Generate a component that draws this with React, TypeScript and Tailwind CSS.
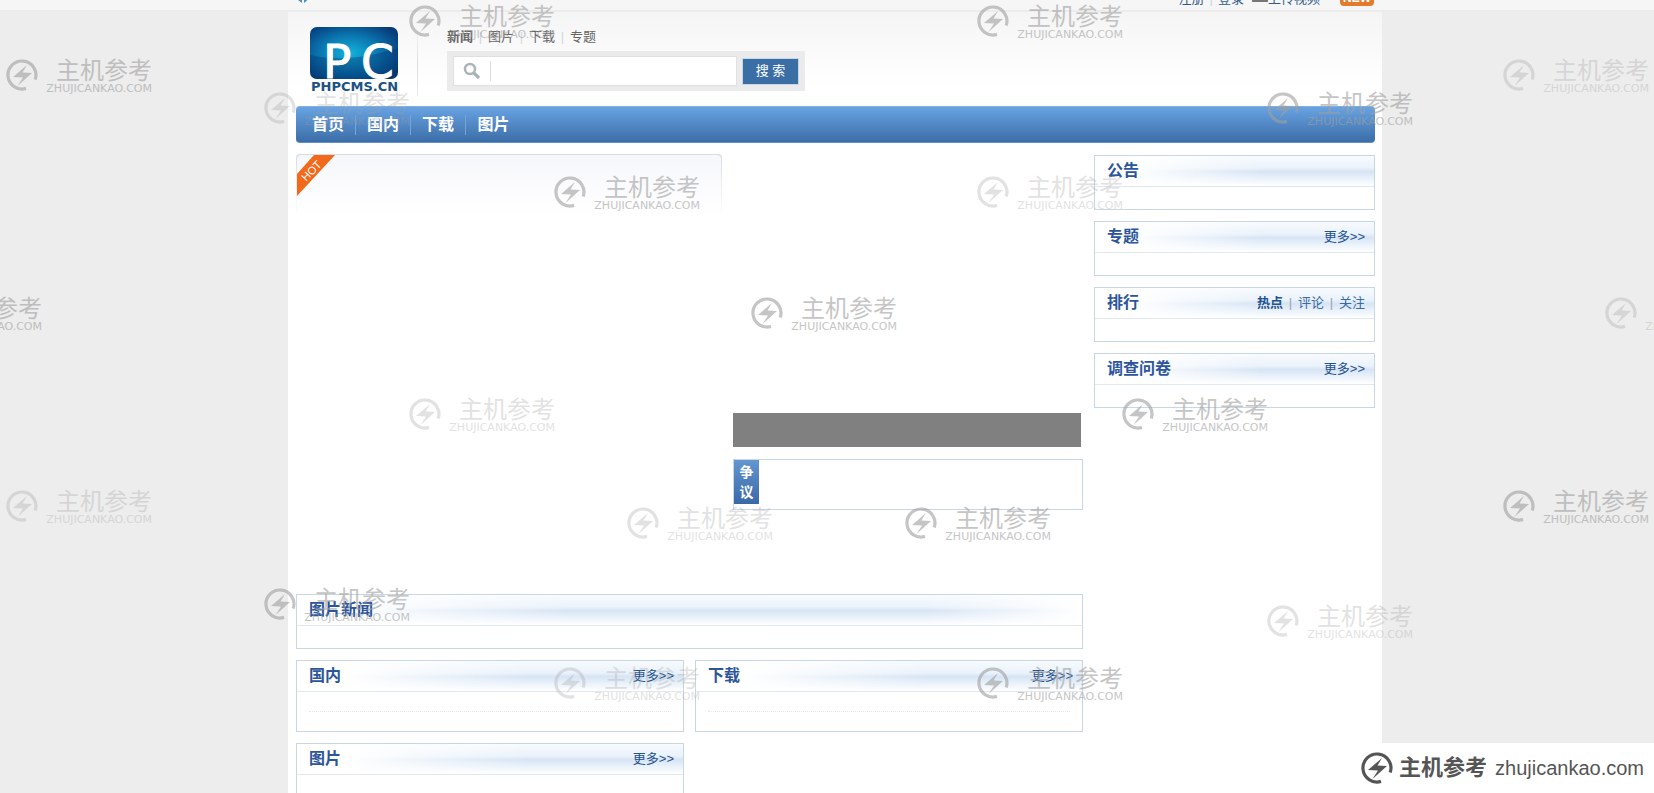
import React from "react";

interface PanelProps {
    title: string;
    more?: boolean;
    fadeRight?: boolean;
    extra?: React.ReactNode;
    className?: string;
    children?: React.ReactNode;
}

interface Mark {
    x: number;
    y: number;
    tone: "strong" | "soft";
}

const navItems = ["首页", "国内", "下载", "图片"];

const searchTypes = ["新闻", "图片", "下载", "专题"];

const markTones = {
    strong: "opacity-60",
    soft: "opacity-30",
};

const marks: Mark[] = [
    { x: 409, y: 5, tone: "strong" },
    { x: 977, y: 5, tone: "strong" },
    { x: 6, y: 59, tone: "strong" },
    { x: 1503, y: 59, tone: "soft" },
    { x: 264, y: 92, tone: "soft" },
    { x: 1267, y: 92, tone: "strong" },
    { x: 554, y: 176, tone: "strong" },
    { x: 977, y: 176, tone: "soft" },
    { x: -104, y: 297, tone: "strong" },
    { x: 751, y: 297, tone: "strong" },
    { x: 1605, y: 297, tone: "soft" },
    { x: 409, y: 398, tone: "soft" },
    { x: 1122, y: 398, tone: "strong" },
    { x: 6, y: 490, tone: "soft" },
    { x: 1503, y: 490, tone: "strong" },
    { x: 627, y: 507, tone: "soft" },
    { x: 905, y: 507, tone: "strong" },
    { x: 264, y: 588, tone: "strong" },
    { x: 1267, y: 605, tone: "soft" },
    { x: 554, y: 667, tone: "soft" },
    { x: 977, y: 667, tone: "strong" },
];

function BoltIcon({ className }: { className?: string }) {
    return (
        <svg viewBox="0 0 32 32" className={className} aria-hidden="true">
            <path
                d="M29.2 20.5 A14 14 0 1 0 20 29.4"
                fill="none"
                stroke="currentColor"
                strokeWidth="3.2"
            />
            <path d="M21 6 L7 18 L17 18.5 L11.5 27 L26 14 L16.5 13.5 Z" fill="currentColor" />
        </svg>
    );
}

function Watermark({ x, y, tone }: Mark) {
    return (
        <div
            className={`absolute flex w-[146px] text-[#a0a0a0] ${markTones[tone]}`}
            style={{ left: x, top: y }}
        >
            <BoltIcon className="size-8 shrink-0" />
            <div className="flex flex-1 flex-col items-end">
                <span className="text-2xl leading-6 whitespace-nowrap">主机参考</span>
                <span className="font-['DejaVu_Sans'] text-[11px] leading-[11px]">
                    ZHUJICANKAO.COM
                </span>
            </div>
        </div>
    );
}

function Logo() {
    return (
        <svg viewBox="0 0 90 68" className="h-[68px] w-[90px]" role="img" aria-label="PHPCMS.CN">
            <defs>
                <radialGradient id="glow" cx="0.45" cy="0.5" r="0.65">
                    <stop offset="0" stopColor="#12b4dc" />
                    <stop offset="0.55" stopColor="#0a72ad" />
                    <stop offset="1" stopColor="#063a78" />
                </radialGradient>
            </defs>
            <rect x="1" y="1" width="88" height="52" rx="7" fill="url(#glow)" />
            <path d="M1 29 Q40 38 89 22 V46 Q89 53 82 53 H8 Q1 53 1 46 Z" fill="#04306b" opacity="0.35" />
            <g fill="#fff" stroke="#fff" strokeWidth="1" fontFamily="DejaVu Sans" fontSize="47">
                <text x="14" y="52">P</text>
                <text x="52" y="52">C</text>
            </g>
            <text x="2" y="65" fill="#1b5183" fontFamily="DejaVu Sans" fontSize="13" fontWeight="700">
                PHPCMS.CN
            </text>
        </svg>
    );
}

function Panel({ title, more, fadeRight, extra, className = "", children }: PanelProps) {
    return (
        <section className={`border border-[#c9d7e4] bg-white ${className}`}>
            <div className="border-b border-[#e1e8ee] bg-[linear-gradient(to_bottom,#f8fbfe,#eaf2fb_40%,#d7e4f4_52%,#e4eef9_68%,#ffffff)]">
                <div
                    className={`flex h-[30px] items-center justify-between pr-[9px] pl-3 ${
                        fadeRight
                            ? "bg-[linear-gradient(to_right,#ffffff_5%,transparent_35%,transparent_80%,#ffffff)]"
                            : "bg-[linear-gradient(to_right,#ffffff_12%,transparent_60%)]"
                    }`}
                >
                    <h2 className="text-base leading-5 font-bold text-[#2c559c]">{title}</h2>
                    {more && (
                        <a href="#" className="text-[13px] leading-5 text-[#23528f]">
                            更多&gt;&gt;
                        </a>
                    )}
                    {extra}
                </div>
            </div>
            {children ?? <div className="h-[22px]" />}
        </section>
    );
}

function DottedBody() {
    return (
        <div className="h-[39px] px-3 pt-[19px]">
            <div className="border-t border-dotted border-[#e8e8e8]" />
        </div>
    );
}

function TopBar() {
    return (
        <div className="border-b-2 border-[#ececec] bg-[#f6f6f6] pl-4">
            <div className="mx-auto flex h-[10px] max-w-[1094px] items-end justify-between px-2 pb-1 text-[13px] leading-[14px] text-[#2f5b88]">
                <svg viewBox="0 0 14 14" className="h-[14px] w-[14px]" aria-hidden="true">
                    <path d="M0 3 H3 L6 0 V11 L2 8 H0 Z" fill="#4f8fbd" />
                    <path d="M8 2 V11 Q14 7 12 2 Z" fill="#4f8fbd" />
                </svg>
                <div className="flex items-end">
                    <a href="#">注册</a>
                    <span className="px-[5px] text-gray-300">|</span>
                    <a href="#">登录</a>
                    <a href="#" className="ml-2 flex items-end">
                        <span className="mb-1 h-2 w-4 border-b-2 border-[#777]" />
                        上传视频
                    </a>
                    <span className="ml-5 h-[14px] rounded-b-sm bg-[#e47a2e] px-[3px] text-xs leading-3 font-bold text-white">
                        NEW
                    </span>
                </div>
            </div>
        </div>
    );
}

function Header() {
    return (
        <header className="flex h-[94px] bg-[linear-gradient(to_bottom,#f5f5f5,#ffffff_80%)]">
            <a href="#" className="mt-[14px] ml-[21px]">
                <Logo />
            </a>
            <div className="mt-4 ml-[18px] h-[68px] w-px bg-[linear-gradient(to_bottom,transparent,#dddddd,#e8e8e8)]" />
            <div className="ml-[29px] pt-4">
                <div className="flex h-[23px] text-[13px] leading-[18px] text-[#666]">
                    {searchTypes.map((type, i) => (
                        <React.Fragment key={type}>
                            {i > 0 && <span className="w-[15px] text-center text-gray-300">|</span>}
                            <a href="#" className={i === 0 ? "font-bold" : ""}>
                                {type}
                            </a>
                        </React.Fragment>
                    ))}
                </div>
                <form className="flex h-10 w-[358px] items-center gap-[5px] bg-[#ebebeb] px-[6px]">
                    <div className="flex h-[30px] flex-1 items-center border border-[#e0e0e0] bg-white">
                        <svg viewBox="0 0 18 18" className="ml-[9px] size-[18px]" aria-hidden="true">
                            <circle cx="7" cy="7" r="5" fill="none" stroke="#a9b4b8" strokeWidth="2.5" />
                            <path d="M11 11 L16 16" stroke="#a9b4b8" strokeWidth="3.2" />
                        </svg>
                        <input
                            type="text"
                            aria-label="搜索"
                            className="ml-[9px] h-5 min-w-0 flex-1 border-l border-[#dddddd] px-2 text-sm outline-none"
                        />
                    </div>
                    <button
                        type="button"
                        className="h-[27px] w-[57px] border border-[#c3d8ec] bg-[#3a6ea5] text-[13px] leading-5 text-white"
                    >
                        搜 索
                    </button>
                </form>
            </div>
        </header>
    );
}

function Sidebar() {
    return (
        <aside className="flex w-[281px] shrink-0 flex-col gap-[11px] pt-px">
            <Panel title="公告" />
            <Panel title="专题" more />
            <Panel
                title="排行"
                extra={
                    <div className="flex text-[13px] leading-5 text-[#386aa5]">
                        <a href="#" className="font-bold text-[#23528f]">
                            热点
                        </a>
                        <span className="w-[15px] text-center text-gray-400">|</span>
                        <a href="#">评论</a>
                        <span className="w-[15px] text-center text-gray-400">|</span>
                        <a href="#">关注</a>
                    </div>
                }
            />
            <Panel title="调查问卷" more />
        </aside>
    );
}

export default function App() {
    return (
        <div className="relative flex min-h-screen flex-col overflow-hidden bg-[#ededed] font-['Liberation_Sans','Noto_Sans_CJK_SC',sans-serif]">
            <TopBar />
            <div className="flex flex-1 flex-col pl-4">
                <div className="mx-auto w-full max-w-[1094px] flex-1 bg-white">
                    <Header />
                    <div className="px-2 pr-[7px]">
                        <nav className="flex h-[37px] items-center rounded-sm border-y border-t-[#84aedb] border-b-[#5f8fc4] bg-linear-to-b from-[#68a3e2] to-[#3c6ea8] px-[5px]">
                            {navItems.map((item, i) => (
                                <a
                                    key={item}
                                    href="#"
                                    className={`w-[55px] text-center text-base leading-5 font-bold text-white ${
                                        i < navItems.length - 1 ? "border-r border-[#76a4d6]" : ""
                                    }`}
                                >
                                    {item}
                                </a>
                            ))}
                        </nav>

                        <div className="flex gap-[11px] pt-[11px]">
                            <main className="min-w-0 flex-1">
                                <div className="flex min-h-[440px] gap-[11px]">
                                    {/* Hot */}
                                    <div className="flex-1">
                                        <div className="h-[62px] rounded-t bg-[linear-gradient(to_bottom,#d6dbe4,#ffffff)] px-px pt-px">
                                            <div className="h-full rounded-t bg-[linear-gradient(to_bottom,#f6f7fb,#ffffff)]">
                                                <svg viewBox="0 0 40 42" className="h-[42px] w-10" aria-hidden="true">
                                                    <path d="M17 0 H38 L0 41 V19 Z" fill="#f2691c" />
                                                    <text
                                                        x="14"
                                                        y="19"
                                                        fill="#fff"
                                                        fontFamily="Liberation Sans"
                                                        fontSize="11"
                                                        textAnchor="middle"
                                                        transform="rotate(-46 15 15)"
                                                    >
                                                        HOT
                                                    </text>
                                                </svg>
                                            </div>
                                        </div>
                                    </div>

                                    {/* Slide + debate */}
                                    <div className="w-[350px] shrink-0 pt-[259px]">
                                        <div className="mr-[2px] h-[34px] bg-[#808080]" />
                                        <div className="mt-3 h-[51px] border border-[#c9d7e4]">
                                            <div className="flex h-11 w-[25px] items-center justify-center bg-linear-to-b from-[#6496cf] to-[#3a69a8] text-center text-sm leading-5 font-bold text-white">
                                                <span className="w-[14px]">争议</span>
                                            </div>
                                        </div>
                                    </div>
                                </div>

                                <Panel title="图片新闻" fadeRight />
                                <div className="mt-[11px] grid grid-cols-2 gap-x-[11px] gap-y-[11px]">
                                    <Panel title="国内" more>
                                        <DottedBody />
                                    </Panel>
                                    <Panel title="下载" more>
                                        <DottedBody />
                                    </Panel>
                                    <Panel title="图片" more className="border-b-0">
                                        <div className="h-[18px]" />
                                    </Panel>
                                </div>
                            </main>
                            <Sidebar />
                        </div>
                    </div>
                </div>
            </div>

            <div className="pointer-events-none absolute inset-0 overflow-hidden">
                {marks.map((mark) => (
                    <Watermark key={`${mark.x}-${mark.y}`} {...mark} />
                ))}
            </div>

            <footer className="absolute right-0 bottom-0 flex h-[50px] items-center bg-white pr-[10px] pl-[6px] text-[#555]">
                <BoltIcon className="size-8" />
                <span className="ml-[6px] text-[22px] leading-8 font-bold">主机参考</span>
                <span className="ml-2 text-xl leading-8">zhujicankao.com</span>
            </footer>
        </div>
    );
}
